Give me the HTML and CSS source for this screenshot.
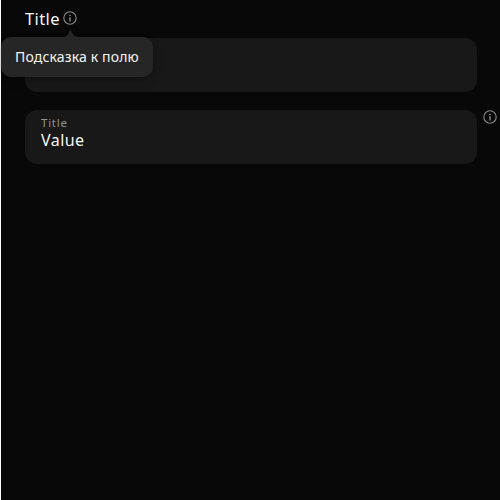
FILE: index.html
```
<!DOCTYPE html>
<html lang="ru">
<head>
<meta charset="utf-8">
<title>TextField</title>
<link rel="stylesheet" href="styles.css">
</head>
<body>
<main class="page">
  <section class="field">
    <div class="label">
      <span class="label-text">Title</span>
      <span class="hint">
        <svg class="icon" viewBox="0 0 16 16"><circle cx="8" cy="8" r="6.2"/><path class="stem" d="M8 7.2v4.2M8 4.7v1.4"/></svg>
        <span class="tooltip">
          <svg class="arrow" viewBox="0 0 17 8"><path d="M0 7C4 7 6 5 7.4 1.4Q8.5 -.8 9.6 1.4C11 5 13 7 17 7V8H0Z"/></svg>
          <span class="tooltip-text">Подсказка к полю</span>
        </span>
      </span>
    </div>
    <div class="box"></div>
  </section>
  <section class="field row">
    <div class="box">
      <span class="inner-label">Title</span>
      <span class="value">Value</span>
    </div>
    <svg class="icon side" viewBox="0 0 16 16"><circle cx="8" cy="8" r="6.2"/><path class="stem" d="M8 7.2v4.2M8 4.7v1.4"/></svg>
  </section>
</main>
</body>
</html>
```
FILE: styles.css
```
* { box-sizing: border-box; }
html { background: #fff; }
body {
  margin: 0;
  overflow: hidden;
  font-family: "Noto Sans", "Open Sans", sans-serif;
  color: #f5f5f5;
}
.page {
  height: 100vh;
  margin-left: 1px;
  padding: 8px 0 0 24px;
  background: #080808;
}
.label {
  display: flex;
  align-items: center;
  gap: 2px;
  height: 20px;
  margin-bottom: 10px;
}
.label-text {
  width: 35px;
  font-size: 16.5px;
  line-height: 21px;
  letter-spacing: 0.4px;
}
.hint {
  position: relative;
  display: flex;
}
.icon {
  flex: none;
  width: 16px;
  height: 16px;
  fill: none;
  stroke: #8c8c8c;
  stroke-width: 1.1;
}
.stem { stroke-width: 1.4; }
.tooltip {
  position: absolute;
  top: 27px;
  left: -61px;
  width: 152px;
  height: 40px;
  padding: 10px 14px;
  border-radius: 10px;
  background: #262626;
  box-shadow: 0 4px 14px -4px rgba(8, 8, 8, .2), 0 1px 4px -1px rgba(0, 0, 0, .4);
}
.arrow {
  position: absolute;
  top: -7px;
  left: 61px;
  width: 17px;
  height: 8px;
  fill: #262626;
}
.tooltip-text {
  display: block;
  font-size: 14px;
  line-height: 20px;
  letter-spacing: 0.15px;
  white-space: nowrap;
}
.box {
  display: flex;
  flex-direction: column;
  width: 452px;
  height: 54px;
  padding: 6px 16px;
  border-radius: 12px;
  background: #181818;
}
.row {
  display: flex;
  gap: 5px;
  margin-top: 18px;
}
.side { margin-top: -1px; }
.inner-label {
  color: #929292;
  font-size: 11.5px;
  line-height: 14px;
  letter-spacing: 0.75px;
}
.value {
  font-size: 16px;
  line-height: 21px;
  letter-spacing: 0.45px;
}
```
